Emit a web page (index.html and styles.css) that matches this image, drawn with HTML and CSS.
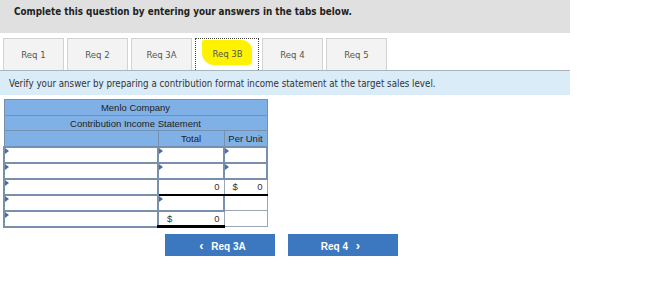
FILE: index.html
```html
<!DOCTYPE html>
<html lang="en">
<head>
  <meta charset="UTF-8" />
  <title>Req 3B</title>
  <link rel="stylesheet" href="styles.css">
</head>
<body>

  <div class="prompt">Complete this question by entering your answers in the tabs below.</div>

  <div class="tabs">
    <div class="tab">Req 1</div>
    <div class="tab">Req 2</div>
    <div class="tab">Req 3A</div>
    <div class="tab active"><span class="mark">Req 3B</span></div>
    <div class="tab">Req 4</div>
    <div class="tab">Req 5</div>
  </div>

  <div class="instruction">Verify your answer by preparing a contribution format income statement at the target sales level.</div>

  <table class="statement">
    <tr class="head"><th colspan="3">Menlo Company</th></tr>
    <tr class="head sub"><th colspan="3">Contribution Income Statement</th></tr>
    <tr class="head cols">
      <th></th>
      <th class="num">Total</th>
      <th class="num">Per Unit</th>
    </tr>
    <tr>
      <td class="in"><span class="flag"></span></td>
      <td class="in"><span class="flag"></span></td>
      <td class="in"><span class="flag"></span></td>
    </tr>
    <tr>
      <td class="in"><span class="flag"></span></td>
      <td class="in"><span class="flag"></span></td>
      <td class="in"><span class="flag"></span></td>
    </tr>
    <tr>
      <td class="in"><span class="flag"></span></td>
      <td class="out single"><span class="val">0</span></td>
      <td class="out single"><span class="cur">$</span><span class="val">0</span></td>
    </tr>
    <tr>
      <td class="in"><span class="flag"></span></td>
      <td class="in"><span class="flag"></span></td>
      <td class="out"></td>
    </tr>
    <tr>
      <td class="in"><span class="flag"></span></td>
      <td class="out double"><span class="cur">$</span><span class="val">0</span></td>
      <td class="out"></td>
    </tr>
  </table>

  <div class="nav">
    <button class="nav-btn"><span class="chev">&#8249;</span> Req 3A</button>
    <button class="nav-btn">Req 4 <span class="chev">&#8250;</span></button>
  </div>

</body>
</html>
```

FILE: styles.css
```css
* {
  box-sizing: border-box;
}

body {
  margin: 0;
  width: 663px;
  font-family: 'DejaVu Sans Condensed', 'DejaVu Sans', sans-serif;
  color: #333;
  background: #fff;
}

.prompt {
  width: 570px;
  height: 33px;
  background: #e0e0e0;
  padding: 6px 0 0 14px;
  font-size: 9.8px;
  font-weight: bold;
  color: #222;
}

.tabs {
  display: flex;
  gap: 3px;
  margin-top: 5px;
  padding-left: 3px;
  height: 32px;
}

.tab {
  width: 61px;
  height: 32px;
  background: #f3f3f3;
  border: 1px solid #d2d2d2;
  border-bottom: none;
  font-size: 9.5px;
  color: #555;
  display: flex;
  align-items: center;
  justify-content: center;
}

.tab.active {
  width: 64px;
  background: #fff;
  border: 1px dotted #444;
  border-bottom: none;
}

.mark {
  background: #fff200;
  color: #555;
  padding: 8px 9px 6px 10px;
  margin-top: -4px;
  border-radius: 2px 10px 4px 12px;
}

.instruction {
  width: 570px;
  height: 25px;
  background: #daecf8;
  border-top: 1px solid #a9b4bd;
  padding: 7px 0 0 9px;
  font-size: 9.7px;
  color: #333;
}

.statement {
  margin: 4px 0 0 3px;
  border-collapse: collapse;
  width: 265px;
  font-family: 'Liberation Sans', Arial, sans-serif;
  font-size: 9.5px;
}

.statement th,
.statement td {
  height: 16px;
  padding: 0;
  border: 1px solid #7790ad;
}

.statement th {
  background: #7fb1e6;
  font-weight: normal;
  color: #222;
  text-align: center;
}

.statement .sub th {
  height: 15px;
}

.statement th:first-child,
.statement td:first-child {
  width: 154px;
}

.statement th:nth-child(2),
.statement td:nth-child(2) {
  width: 66px;
}

.statement td.in {
  background: #fff;
  border: 2px solid #7890ab;
  position: relative;
}

.flag {
  position: absolute;
  left: 0;
  top: 0;
  width: 0;
  height: 0;
  border-top: 3px solid transparent;
  border-bottom: 3px solid transparent;
  border-left: 4px solid #4a6ea0;
}

.statement td.out {
  background: #fff;
  border: 1px solid #9aa6b4;
  text-align: right;
  padding: 0 4px 0 8px;
}

.statement td.single {
  border-bottom: 2px solid #000;
}

.statement td.double {
  border-bottom: 3px solid #000;
}

.cur {
  float: left;
}

.nav {
  display: flex;
  gap: 13px;
  margin: 6px 0 0 165px;
}

.nav-btn {
  width: 110px;
  height: 22px;
  border: none;
  background: #3b78c0;
  color: #fff;
  font-family: 'Liberation Sans', Arial, sans-serif;
  font-size: 10px;
  font-weight: bold;
  padding: 0;
}

.chev {
  font-size: 13px;
  margin: 0 5px;
}
```
